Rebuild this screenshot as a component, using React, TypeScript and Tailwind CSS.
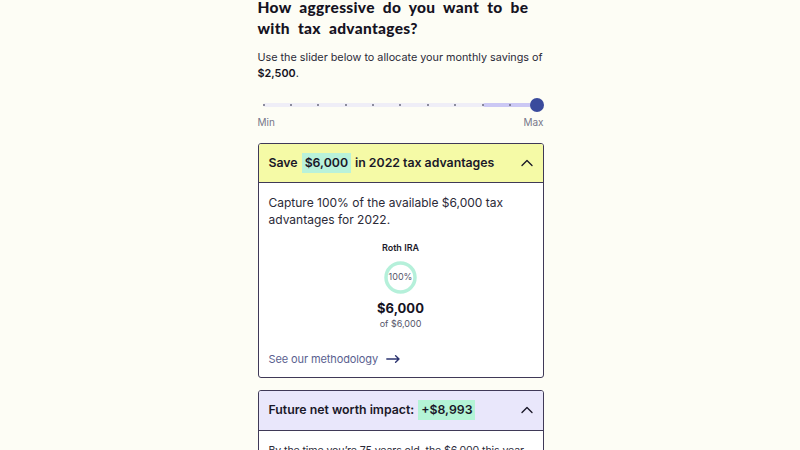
import { ChevronUp } from 'lucide-react';

const ticks = Array.from({ length: 11 }, (_, i) => i);

function Slider() {
  return (
    <div className="mt-[16px]">
      <div className="relative h-[14px]">
        <div className="absolute left-[5px] right-[6px] top-[5px] h-[4px] rounded-full bg-[#efeef7]" />
        <div className="absolute left-[225px] right-[6px] top-[5px] h-[4px] rounded-full bg-[#cbc8f4]" />
        <div className="absolute inset-x-[5px] top-[6px] flex justify-between">
          {ticks.map((t) => (
            <span key={t} className="h-[2px] w-[2px] rounded-full bg-[#6b6b80]" />
          ))}
        </div>
        <div className="absolute right-0 top-0 h-[14px] w-[14px] rounded-full bg-[#3a4b9c]" />
      </div>
      <div className="mt-[3px] flex justify-between text-[10px] text-[#77778a]">
        <span>Min</span>
        <span>Max</span>
      </div>
    </div>
  );
}

function Ring() {
  return (
    <div className="relative mt-[6px] flex h-[33px] w-[33px] items-center justify-center">
      <svg width="33" height="33" viewBox="0 0 33 33" className="absolute inset-0">
        <circle cx="16.5" cy="16.5" r="14.5" fill="none" stroke="#b5f0da" strokeWidth="3.5" />
      </svg>
      <span className="text-[9px] text-[#55556a]">100%</span>
    </div>
  );
}

export default function App() {
  return (
    <div className="min-h-[450px] w-full overflow-hidden bg-[#fdfdf5] font-['Inter','Noto_Sans',sans-serif] text-[#1d1b2c]">
      <div className="mx-auto -mt-[3px] w-[287px] pl-px">
        <h1 className="whitespace-nowrap font-['Lato',sans-serif] text-[15.5px] font-black leading-[21px] tracking-[0.02em] [word-spacing:4px] text-[#15131f]">
          How aggressive do you want to be
          <br />
          with tax advantages?
        </h1>
        <p className="mt-[11px] text-[10.8px] leading-[16px] text-[#2b2a38]">
          Use the slider below to allocate your monthly savings of{' '}
          <br />
          <span className="font-semibold text-[#15131f]">$2,500</span>.
        </p>

        <Slider />

        <section className="mt-[13px] overflow-hidden rounded-[3px] border border-[#3f3957] bg-white">
          <div className="flex h-[39px] items-center justify-between border-b border-[#3f3957] bg-[#f5faa6] pl-[10px] pr-[6px]">
            <div className="flex items-center text-[12.3px] font-semibold text-[#1a1828]">
              <span>Save</span>
              <span className="mx-[4px] bg-[#b9f2da] px-[3px] py-[1px]">$6,000</span>
              <span>in 2022 tax advantages</span>
            </div>
            <ChevronUp size={20} strokeWidth={1.6} className="text-[#1a1828]" />
          </div>
          <div className="px-[10px] pt-[11px] pb-[9px]">
            <p className="text-[12px] leading-[17px] text-[#2b2a38]">
              Capture 100% of the available $6,000 tax advantages for 2022.
            </p>
            <div className="mt-[13px] flex flex-col items-center">
              <span className="text-[9px] font-semibold text-[#1d1b2c]">Roth IRA</span>
              <Ring />
              <span className="mt-[5px] text-[13px] font-bold leading-[18px] text-[#15131f]">$6,000</span>
              <span className="text-[9px] text-[#55556a]">of $6,000</span>
            </div>
            <a className="mt-[21px] flex items-center gap-[8px] text-[11px] tracking-[-0.01em] text-[#5a5f8f]">
              <span>See our methodology</span>
              <svg width="14" height="8" viewBox="0 0 14 8" fill="none" stroke="#2c3470" strokeWidth="1.4" strokeLinecap="round" strokeLinejoin="round">
                <path d="M0.8 4h12.2M9.6 0.8 13 4l-3.4 3.2" />
              </svg>
            </a>
          </div>
        </section>

        <section className="mt-[12px] overflow-hidden rounded-[3px] border border-[#3f3957] bg-white">
          <div className="flex h-[40px] items-center justify-between border-b border-[#3f3957] bg-[#e9e7fb] pl-[10px] pr-[6px]">
            <div className="flex items-center text-[12.3px] font-semibold text-[#1a1828]">
              <span>Future net worth impact:</span>
              <span className="ml-[4px] bg-[#b4f4d6] px-[3px] py-[1px]">+$8,993</span>
            </div>
            <ChevronUp size={20} strokeWidth={1.6} className="text-[#1a1828]" />
          </div>
          <div className="px-[10px] pt-[11px] pb-[10px]">
            <p className="text-[10.6px] leading-[17px] tracking-[-0.01em] text-[#2b2a38]">
              By the time you’re 75 years old, the $6,000 this year could grow into a meaningful boost to your net worth.
            </p>
          </div>
        </section>
      </div>
    </div>
  );
}
